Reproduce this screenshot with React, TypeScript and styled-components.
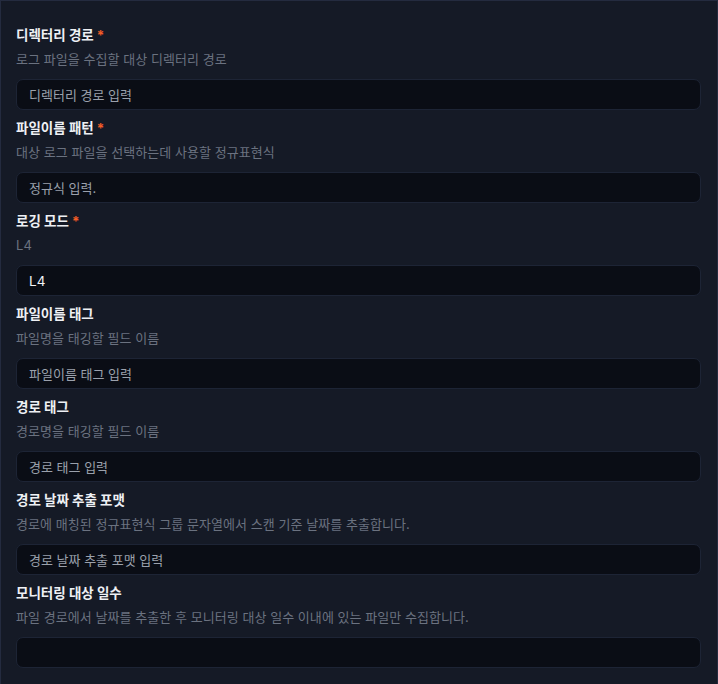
import * as React from 'react';
import styled, { createGlobalStyle } from 'styled-components';

const GlobalStyles = createGlobalStyle`
  html, body {
    margin: 0;
    padding: 0;
    background: #151a26;
    overflow: hidden;
  }
  * {
    box-sizing: border-box;
  }
`;

const Panel = styled.div`
  width: 718px;
  min-height: 720px;
  background: #151a26;
  border: 1px solid #242b3f;
  padding: 24px 16px 24px 15px;
  font-family: Inter, 'Noto Sans CJK KR', sans-serif;
  display: flex;
  flex-direction: column;
  gap: 8px;
`;

const Field = styled.div`
  display: flex;
  flex-direction: column;
`;

const Label = styled.div`
  font-size: 13.5px;
  line-height: 20px;
  font-weight: 700;
  color: #eef0f4;
`;

const Required = styled.span`
  color: #f25c26;
  margin-left: 3px;
`;

const Description = styled.div`
  margin-top: 4px;
  font-size: 13px;
  line-height: 20px;
  letter-spacing: 0.05px;
  color: #6b7280;
`;

const Input = styled.input<{ $filled?: boolean }>`
  margin-top: 10px;
  height: 31px;
  width: 100%;
  padding: 0 12px;
  background: #0a0d15;
  border: 1px solid #1d2435;
  border-radius: 7px;
  font-family: inherit;
  font-size: ${(p) => (p.$filled ? '13.5px' : '13px')};
  font-weight: 400;
  color: #f2f4f7;
  outline: none;

  &::placeholder {
    color: #9ba1ac;
  }
`;

interface FieldDef {
  label: string;
  required?: boolean;
  description: string;
  placeholder?: string;
  value?: string;
}

const fields: FieldDef[] = [
  {
    label: '디렉터리 경로',
    required: true,
    description: '로그 파일을 수집할 대상 디렉터리 경로',
    placeholder: '디렉터리 경로 입력',
  },
  {
    label: '파일이름 패턴',
    required: true,
    description: '대상 로그 파일을 선택하는데 사용할 정규표현식',
    placeholder: '정규식 입력.',
  },
  {
    label: '로깅 모드',
    required: true,
    description: 'L4',
    value: 'L4',
  },
  {
    label: '파일이름 태그',
    description: '파일명을 태깅할 필드 이름',
    placeholder: '파일이름 태그 입력',
  },
  {
    label: '경로 태그',
    description: '경로명을 태깅할 필드 이름',
    placeholder: '경로 태그 입력',
  },
  {
    label: '경로 날짜 추출 포맷',
    description: '경로에 매칭된 정규표현식 그룹 문자열에서 스캔 기준 날짜를 추출합니다.',
    placeholder: '경로 날짜 추출 포맷 입력',
  },
  {
    label: '모니터링 대상 일수',
    description: '파일 경로에서 날짜를 추출한 후 모니터링 대상 일수 이내에 있는 파일만 수집합니다.',
    placeholder: '',
  },
];

const App: React.FC = () => (
  <>
    <GlobalStyles />
    <Panel>
      {fields.map((f) => (
        <Field key={f.label}>
          <Label>
            {f.label}
            {f.required && <Required>*</Required>}
          </Label>
          <Description>{f.description}</Description>
          <Input
            placeholder={f.placeholder}
            defaultValue={f.value}
            $filled={!!f.value}
            readOnly
          />
        </Field>
      ))}
    </Panel>
  </>
);

export default App;
